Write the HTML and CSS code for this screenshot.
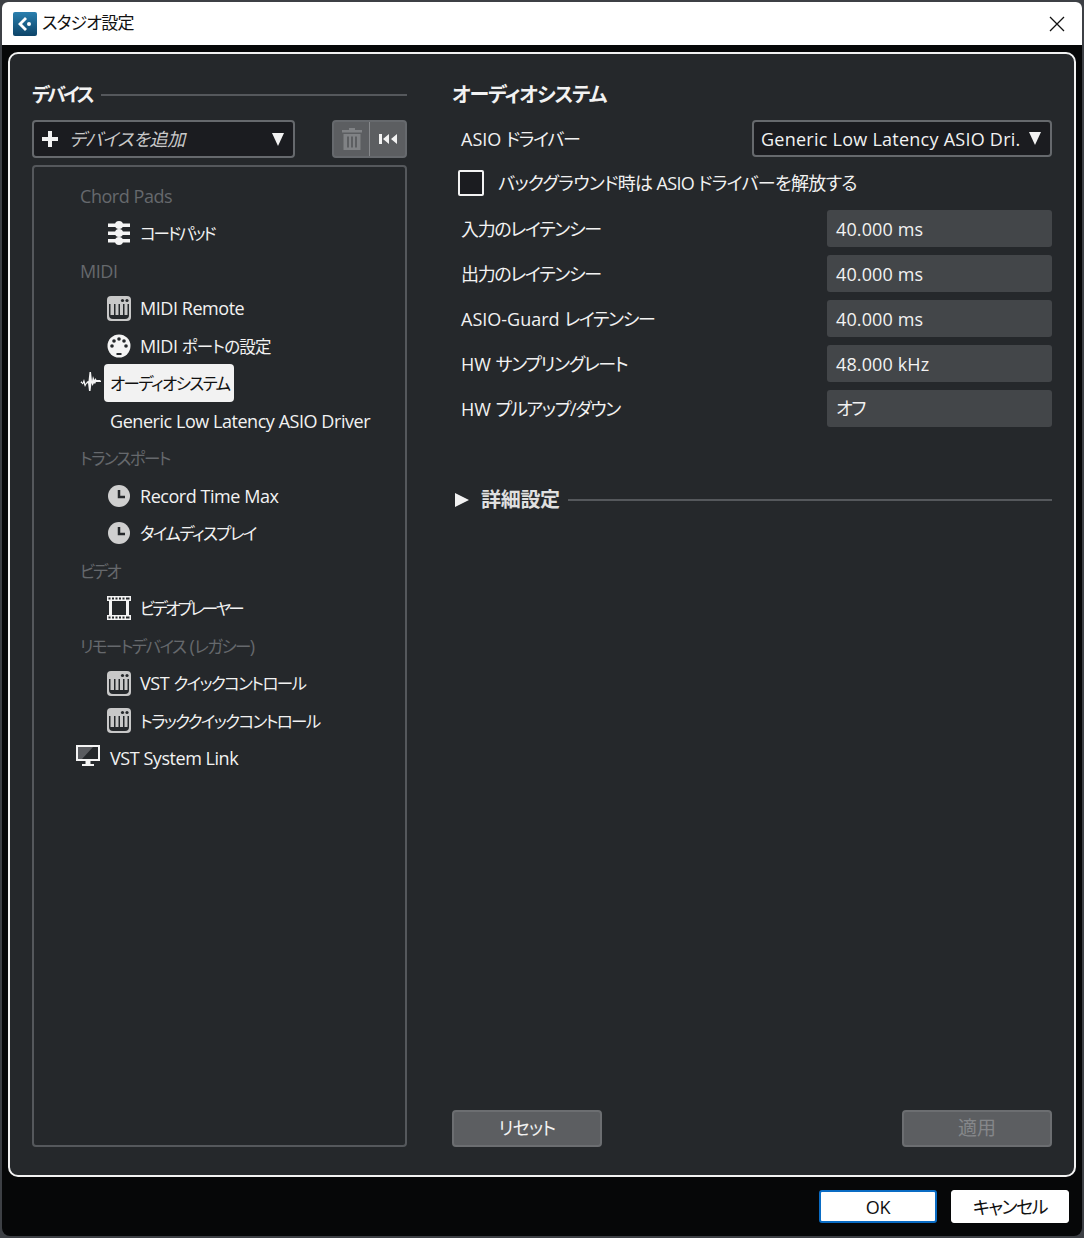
FILE: index.html
```html
<!DOCTYPE html>
<html lang="ja">
<head>
<meta charset="utf-8">
<title>スタジオ設定</title>
<link rel="stylesheet" href="styles.css">
</head>
<body>
<svg class="defs" width="0" height="0" aria-hidden="true">
  <defs>
    <symbol id="keys" viewBox="0 0 24 25">
      <rect width="24" height="25" rx="4" fill="#c8c8c8"/>
      <path fill="#25282b" d="M2 8h20v11a4 4 0 0 1-4 4H6a4 4 0 0 1-4-4z"/>
      <path fill="#c8c8c8" d="M3.500 8H7v11H3.500zM8.500 8h3v11h-3zM13 8h3v11h-3zM17.500 8h3v11h-3z"/>
      <circle cx="15.500" cy="4.500" r="1.600" fill="#25282b"/>
      <circle cx="20" cy="4.500" r="1.600" fill="#25282b"/>
    </symbol>
    <symbol id="clock" viewBox="0 0 22 22">
      <circle cx="11" cy="11" r="11" fill="#cfcfcf"/>
      <path d="M11 5v7h6" fill="none" stroke="#25282b" stroke-width="2.500"/>
    </symbol>
  </defs>
</svg>
<div class="window">
  <header class="titlebar">
    <div class="title-left">
      <svg class="app-icon" width="24" height="24" viewBox="0 0 24 24">
        <defs><linearGradient id="appg" x1="0" y1="0" x2="0" y2="1"><stop offset="0" stop-color="#2a7fae"/><stop offset="1" stop-color="#0d4468"/></linearGradient></defs>
        <rect width="24" height="24" rx="2" fill="url(#appg)"/>
        <path d="M12 5l-7 7 7 7 2-2-5-5 5-5z" fill="#fff"/>
        <circle cx="16" cy="12" r="2" fill="#fff"/>
      </svg>
      <span class="title-text">スタジオ設定</span>
    </div>
    <svg class="close" width="16" height="16" viewBox="0 0 16 16"><path d="M1 1l14 14M15 1L1 15" stroke="#111" stroke-width="1.300" fill="none"/></svg>
  </header>
  <main class="panel">
    <section class="left">
      <div class="section-head">
        <span class="h-title">デバイス</span><span class="rule"></span>
      </div>
      <div class="toolbar">
        <div class="add-select">
          <svg width="18" height="18" viewBox="0 0 18 18"><path d="M7 1h4v6h6v4h-6v6H7v-6H1V7h6z" fill="#f2f2f2"/></svg>
          <span class="add-text">デバイスを追加</span>
          <span class="caret"></span>
        </div>
        <div class="btn-group">
          <div class="btn-cell dim">
            <svg width="22" height="24" viewBox="0 0 22 24"><path fill="#808285" fill-rule="evenodd" d="M8 1h6v2h7v2.500H1V3h7zM2.500 7h17v16h-17zM6 9.500v11h2v-11zM10 9.500v11h2v-11zM14 9.500v11h2v-11z"/></svg>
          </div>
          <div class="btn-cell">
            <svg width="20" height="12" viewBox="0 0 20 12"><path fill="#f2f2f2" d="M1 1h3v10H1zM11 1v10L5 6zM19 1v10l-6-5z"/></svg>
          </div>
        </div>
      </div>
      <div class="tree">
        <div class="row group">Chord Pads</div>
        <div class="row item">
          <svg class="ic" width="24" height="24" viewBox="0 0 24 24"><path fill="#f4f4f4" d="M1 2.500h22V6H1zM1 10.500h22V14H1zM1 18h22v3.500H1z"/><circle cx="12" cy="4" r="4" fill="#f4f4f4"/><circle cx="12" cy="12" r="4" fill="#f4f4f4"/><circle cx="12" cy="20" r="4" fill="#f4f4f4"/></svg>
          <span class="k tight">コードパッド</span>
        </div>
        <div class="row group">MIDI</div>
        <div class="row item"><svg class="ic" width="24" height="25"><use href="#keys"/></svg><span>MIDI Remote</span></div>
        <div class="row item">
          <svg class="ic" width="24" height="24" viewBox="0 0 24 24"><circle cx="12" cy="12" r="11.500" fill="#f4f4f4"/><g fill="#25282b"><circle cx="12" cy="5" r="1.800"/><circle cx="7" cy="7" r="1.800"/><circle cx="17" cy="7" r="1.800"/><circle cx="5" cy="12" r="1.800"/><circle cx="19" cy="12" r="1.800"/></g><rect x="9.500" y="19" width="5" height="2" fill="#25282b"/></svg>
          <span>MIDI <span class="k loose">ポートの設定</span></span>
        </div>
        <div class="row root">
          <svg class="ic-root" width="28" height="24" viewBox="0 0 28 24"><path fill="#f4f4f4" d="M0 12h4.500l1-2 1 2 1.500-4 1.500 5 1.500-2.500 1.500-.5 1-9h1.500l1 9 1-5 1.500 4 1-2 1 2h3.500l1 1v1h-5l-1 2-1-1-1.500 3-1-3-1 8h-1.500l-1-8-1.500 1-1.500 3-1.500-4-1 1.500-1-1.500H0z"/></svg>
          <span class="selected"><span class="k">オーディオシステム</span></span>
        </div>
        <div class="row sub">Generic Low Latency ASIO Driver</div>
        <div class="row group"><span class="k">トランスポート</span></div>
        <div class="row item"><svg class="ic" width="22" height="22"><use href="#clock"/></svg><span>Record Time Max</span></div>
        <div class="row item"><svg class="ic" width="22" height="22"><use href="#clock"/></svg><span class="k">タイムディスプレイ</span></div>
        <div class="row group"><span class="k tight">ビデオ</span></div>
        <div class="row item">
          <svg class="ic" width="24" height="24" viewBox="0 0 24 24"><path fill="#f4f4f4" fill-rule="evenodd" d="M0 0h24v5H0zM1.500 1.500v2h2v-2zM5 1.500v2h2v-2zM8.500 1.500v2h2v-2zM12 1.500v2h2v-2zM15.500 1.500v2h2v-2zM19 1.500v2h3.500v-2zM0 19h24v5H0zM1.500 20.500v2h2v-2zM5 20.500v2h2v-2zM8.500 20.500v2h2v-2zM12 20.500v2h2v-2zM15.500 20.500v2h2v-2zM19 20.500v2h3.500v-2zM2 5h3v14H2zM19 5h3v14h-3z"/></svg>
          <span class="k tighter">ビデオプレーヤー</span>
        </div>
        <div class="row group"><span><span class="k">リモートデバイス</span> (<span class="k">レガシー</span>)</span></div>
        <div class="row item"><svg class="ic" width="24" height="25"><use href="#keys"/></svg><span>VST <span class="k">クイックコントロール</span></span></div>
        <div class="row item"><svg class="ic" width="24" height="25"><use href="#keys"/></svg><span class="k">トラッククイックコントロール</span></div>
        <div class="row root">
          <svg class="ic-root mon" width="24" height="22" viewBox="0 0 24 22"><path fill="#f4f4f4" fill-rule="evenodd" d="M0 0h24v16H0zM2 2v12h20V2zM9.500 16h5v3H18v2H6v-2h3.500z"/><path fill="#5a5c60" d="M2 2h15L6 14H2z"/></svg>
          <span class="root-label">VST System Link</span>
        </div>
      </div>
    </section>
    <section class="right">
      <h2 class="r-title">オーディオシステム</h2>
      <div class="form-row first">
        <span class="label">ASIO <span class="k">ドライバー</span></span>
        <div class="driver"><span>Generic Low Latency ASIO Dri.</span><span class="caret"></span></div>
      </div>
      <div class="check-row">
        <span class="checkbox"></span>
        <span class="check-label">バックグラウンド時は ASIO ドライバーを解放する</span>
      </div>
      <div class="form-row"><span class="label"><span class="k">入力のレイテンシー</span></span><div class="value">40.000 ms</div></div>
      <div class="form-row"><span class="label"><span class="k">出力のレイテンシー</span></span><div class="value">40.000 ms</div></div>
      <div class="form-row"><span class="label">ASIO-Guard <span class="k">レイテンシー</span></span><div class="value">40.000 ms</div></div>
      <div class="form-row"><span class="label">HW <span class="k">サンプリングレート</span></span><div class="value">48.000 kHz</div></div>
      <div class="form-row"><span class="label">HW <span class="k">プルアップ/ダウン</span></span><div class="value"><span class="k">オフ</span></div></div>
      <div class="advanced">
        <svg width="14" height="14" viewBox="0 0 14 14"><path d="M0 0l14 7-14 7z" fill="#f2f2f2"/></svg>
        <span class="adv-title">詳細設定</span><span class="rule"></span>
      </div>
      <div class="actions">
        <div class="btn">リセット</div>
        <div class="btn disabled">適用</div>
      </div>
    </section>
  </main>
  <footer class="footer">
    <div class="dlg-btn primary">OK</div>
    <div class="dlg-btn cancel">キャンセル</div>
  </footer>
</div>
</body>
</html>
```
FILE: styles.css
```css
* { box-sizing: border-box; }
html, body { margin: 0; height: 100%; }
body {
  width: 1084px;
  height: 1238px;
  overflow: hidden;
  background: #3d4045;
  padding: 2px;
  font-family: "Open Sans", "Noto Sans CJK JP", sans-serif;
  font-size: 18px;
  font-feature-settings: "palt";
  color: #f2f2f2;
}
.defs { position: absolute; }
.window {
  height: 100%;
  display: flex;
  flex-direction: column;
  background: #060708;
  border-radius: 6px 6px 8px 8px;
  overflow: hidden;
}
.titlebar {
  height: 43px;
  flex: none;
  background: #fff;
  color: #111;
  display: flex;
  align-items: center;
  justify-content: space-between;
  padding: 0 17px 0 11px;
}
.title-left { display: flex; align-items: center; gap: 5px; }
.title-text { font-size: 17px; letter-spacing: -0.8px; line-height: 20px; padding-bottom: 2px; }
.panel {
  margin: 7px 6px 0;
  height: 1125px;
  flex: none;
  border: 2px solid #f2f2f2;
  border-radius: 10px;
  background: #25282b;
  padding: 0 22px 28px 22px;
  display: flex;
  gap: 45px;
}
.left { width: 375px; flex: none; display: flex; flex-direction: column; }
.right { flex: 1; display: flex; flex-direction: column; }
.section-head { height: 40px; margin-top: 20px; display: flex; align-items: center; gap: 9px; }
.section-head .rule { margin-top: 2px; }
.h-title { font-size: 19px; font-weight: 700; letter-spacing: -2.800px; }
.rule { flex: 1; height: 2px; background: #55585c; }
.toolbar { height: 38px; margin-top: 6px; display: flex; justify-content: space-between; }
.add-select {
  width: 263px;
  border: 2px solid #66696d;
  border-radius: 4px;
  background: #1b1c20;
  display: flex;
  align-items: center;
  padding: 0 9px 0 7px;
}
.add-text { flex: 1; margin-left: 10px; font-style: italic; color: #c9c9c9; letter-spacing: -0.3px; padding-bottom: 3px; }
.caret {
  width: 0;
  height: 0;
  flex: none;
  border-left: 6.500px solid transparent;
  border-right: 6.500px solid transparent;
  border-top: 13px solid #f2f2f2;
}
.btn-group {
  width: 75px;
  background: #5c5e61;
  border: 2px solid #66696d;
  border-radius: 4px;
  display: flex;
}
.btn-cell { flex: 1; display: flex; align-items: center; justify-content: center; }
.btn-cell.dim { border-right: 1px solid #87898c; }
.tree {
  margin-top: 7px;
  flex: 1;
  border: 2px solid #55585c;
  border-radius: 4px;
  padding: 10px 0 0;
}
.row { height: 37.500px; display: flex; align-items: center; letter-spacing: -0.45px; white-space: nowrap; }
.tree .k { font-size: 16.500px; letter-spacing: -1.600px; }
.tree .k.loose { letter-spacing: -0.800px; }
.tree .k.tight { letter-spacing: -2px; }
.tree .k.tighter { letter-spacing: -2.700px; }
.group { padding-left: 46px; color: #66696d; }
.item { padding-left: 73px; gap: 9px; }
.item .ic { flex: none; }
.ic { width: 24px; }
.root { padding-left: 42px; }
.ic-root { flex: none; }
.ic-root.mon { margin-right: 10px; margin-top: -4px; }
.selected {
  background: #f2f2f2;
  color: #111;
  border-radius: 4px;
  height: 38px;
  padding: 0 5px 0 6px;
  display: flex;
  align-items: center;
}
.sub { padding-left: 76px; }
.r-title { margin: 21px 0 0; height: 40px; font-size: 20px; line-height: 40px; font-weight: 700; letter-spacing: -1.150px; }
.form-row { height: 37px; margin-top: 8px; display: flex; align-items: center; justify-content: space-between; padding-left: 9px; }
.form-row.first { margin-top: 5px; }
.check-row + .form-row { margin-top: 9px; }
.label { white-space: nowrap; padding-bottom: 2px; }
.label .k { letter-spacing: -1.300px; }
.value .k { letter-spacing: -1.300px; padding-bottom: 3px; }
.driver {
  width: 300px;
  height: 37px;
  border: 2px solid #66696d;
  border-radius: 4px;
  background: #1b1c20;
  display: flex;
  align-items: center;
  justify-content: space-between;
  padding: 0 9px 0 7px;
  white-space: nowrap;
  letter-spacing: 0.250px;
}
.value {
  width: 225px;
  height: 37px;
  border-radius: 3px;
  background: #434649;
  display: flex;
  align-items: center;
  padding-left: 9px;
  letter-spacing: 0.130px;
}
.check-row { height: 37px; margin-top: 7px; display: flex; align-items: center; gap: 14px; padding-left: 6px; letter-spacing: -0.65px; }
.check-label { padding-bottom: 2px; }
.checkbox { width: 26px; height: 26px; flex: none; border: 2px solid #f2f2f2; border-radius: 2px; background: #1b1c20; }
.advanced { margin-top: 54px; height: 37px; display: flex; align-items: center; padding-left: 3px; }
.adv-title { margin: 0 8px 0 12px; font-size: 20px; font-weight: 700; letter-spacing: -0.300px; color: #e0e0e0; padding-bottom: 3px; }
.actions { margin-top: auto; display: flex; justify-content: space-between; }
.btn {
  width: 150px;
  height: 37px;
  background: #5c5e61;
  border: 2px solid #6c6e71;
  border-radius: 4px;
  display: flex;
  align-items: center;
  justify-content: center;
  letter-spacing: -0.800px;
  padding-bottom: 3px;
}
.btn.disabled { color: #85878a; font-size: 19px; letter-spacing: 0; }
.footer { flex: 1; display: flex; justify-content: flex-end; align-items: flex-start; gap: 14px; padding: 13px 13px 0 0; }
.dlg-btn {
  width: 118px;
  height: 33px;
  background: #fff;
  color: #111;
  border: 1px solid #fff;
  border-radius: 3px;
  display: flex;
  align-items: center;
  justify-content: center;
  letter-spacing: -0.300px;
}
.dlg-btn.cancel { letter-spacing: -1.500px; padding-bottom: 1px; }
.dlg-btn.primary { border: 2px solid #0a6cc4; }
```
